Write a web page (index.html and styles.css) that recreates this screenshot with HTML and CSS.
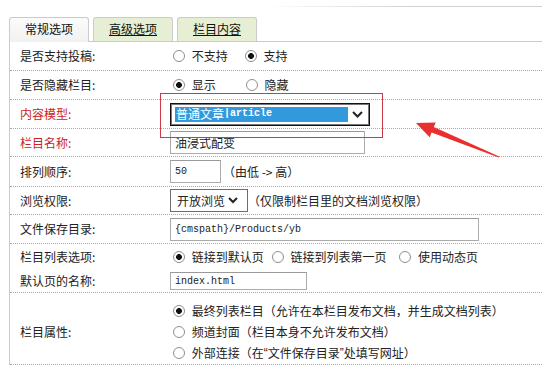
FILE: index.html
```html
<!DOCTYPE html>
<html lang="zh">
<head>
  <meta charset="UTF-8">
  <title>栏目设置</title>
  <link rel="stylesheet" href="styles.css">
</head>
<body>

<div class="page">
  <div class="topline"></div>

  <ul class="tabs">
    <li class="tab active">常规选项</li>
    <li class="tab"><a href="#">高级选项</a></li>
    <li class="tab"><a href="#">栏目内容</a></li>
  </ul>

  <div class="form">
    <div class="row">
      <div class="label">是否支持投稿:</div>
      <div class="field">
        <label class="opt"><input type="radio" class="radio" name="ispost"> 不支持</label>
        <label class="opt opt-a"><input type="radio" class="radio" name="ispost" checked> 支持</label>
      </div>
    </div>

    <div class="row">
      <div class="label">是否隐藏栏目:</div>
      <div class="field">
        <label class="opt"><input type="radio" class="radio" name="ishidden" checked> 显示</label>
        <label class="opt opt-b"><input type="radio" class="radio" name="ishidden"> 隐藏</label>
      </div>
    </div>

    <div class="row">
      <div class="label red">内容模型:</div>
      <div class="field">
        <div class="select select-model">
          <span class="picked"><span>普通文章</span><span class="mono">|article</span></span>
          <svg class="chev" width="11" height="7" viewBox="0 0 11 7"><path d="M1 1 L5.5 5.5 L10 1"/></svg>
        </div>
      </div>
    </div>

    <div class="row tight">
      <div class="label red">栏目名称:</div>
      <div class="field">
        <input type="text" class="text text-name" value="油浸式配变">
      </div>
    </div>

    <div class="row tall">
      <div class="label">排列顺序:</div>
      <div class="field">
        <input type="text" class="text mono text-order" value="50">
        <span class="note">（由低 -&gt; 高）</span>
      </div>
    </div>

    <div class="row tight">
      <div class="label">浏览权限:</div>
      <div class="field">
        <div class="select select-rank">
          <span>开放浏览</span>
          <svg class="chev" width="10" height="7" viewBox="0 0 10 7"><path d="M1 1 L5 5 L9 1"/></svg>
        </div>
        <span>（仅限制栏目里的文档浏览权限）</span>
      </div>
    </div>

    <div class="row">
      <div class="label">文件保存目录:</div>
      <div class="field">
        <input type="text" class="text mono text-path" value="{cmspath}/Products/yb">
      </div>
    </div>

    <div class="row open">
      <div class="label">栏目列表选项:</div>
      <div class="field">
        <label class="opt"><input type="radio" class="radio" name="isdefault" checked> 链接到默认页</label>
        <label class="opt opt-c"><input type="radio" class="radio" name="isdefault"> 链接到列表第一页</label>
        <label class="opt opt-d"><input type="radio" class="radio" name="isdefault"> 使用动态页</label>
      </div>
    </div>

    <div class="row small">
      <div class="label">默认页的名称:</div>
      <div class="field">
        <input type="text" class="text mono text-index" value="index.html">
      </div>
    </div>

    <div class="row multi">
      <div class="label">栏目属性:</div>
      <div class="field lines">
        <label class="opt line"><input type="radio" class="radio" name="ispart" checked> 最终列表栏目（允许在本栏目发布文档，并生成文档列表）</label>
        <label class="opt line"><input type="radio" class="radio" name="ispart"> 频道封面（栏目本身不允许发布文档）</label>
        <label class="opt line"><input type="radio" class="radio" name="ispart"> 外部连接（在<span class="q">“</span>文件保存目录<span class="q">”</span>处填写网址）</label>
      </div>
    </div>
  </div>

  <div class="mark"></div>
  <svg class="arrow" width="95" height="52" viewBox="0 0 95 52">
    <polygon points="6,12 25.7,11.4 23.8,16 89.2,45.5 88.8,46.5 21.6,21.6 19.7,26.2"/>
  </svg>
</div>

</body>
</html>
```

FILE: styles.css
```css
body {
  margin: 0;
  font-family: "Noto Sans CJK SC", sans-serif;
  font-size: 12px;
  line-height: 16px;
  color: #222;
  background: #ffffff;
}
.page {
  position: relative;
  padding-left: 9px;
}
.topline {
  height: 1px;
  margin-top: 6px;
  background: linear-gradient(to right, rgba(210,210,210,0) 48%, #d2d2d2 75%);
}
.tabs {
  display: flex;
  align-items: flex-start;
  gap: 4px;
  height: 24px;
  margin: 10px 0 0;
  padding: 0;
  list-style: none;
  border-bottom: 1px solid #cbcbcb;
}
.tab {
  width: 80px;
  height: 24px;
  box-sizing: border-box;
  border: 1px solid #cbcbcb;
  border-bottom: none;
  border-radius: 3px 3px 0 0;
  background: #e6efd3;
  text-align: center;
  line-height: 22px;
}
.tab a {
  color: #111;
  text-decoration: underline;
}
.tab.active {
  height: 25px;
  background: linear-gradient(#fbfbfb, #f1f1f1);
  color: #111;
}
.form {
  border-left: 1px solid #cbcbcb;
}
.row {
  display: flex;
  align-items: center;
  height: 28px;
  border-bottom: 1px dotted #a8a8a8;
}
.row.tight {
  height: 27px;
}
.row.tall {
  height: 29px;
}
.row.open {
  height: 26px;
  border-bottom: none;
}
.row.small {
  height: 22px;
}
.row.multi {
  height: auto;
  padding: 7px 0 1px;
}
.label {
  flex: none;
  width: 160px;
  padding-left: 10px;
  box-sizing: border-box;
}
.label.red {
  color: #cc2222;
}
.field {
  display: flex;
  align-items: center;
}
.lines {
  flex-direction: column;
  align-items: flex-start;
}
.opt {
  display: inline-flex;
  align-items: center;
  white-space: pre;
}
.opt-a {
  margin-left: 14px;
}
.opt-b {
  margin-left: 27px;
}
.opt-c {
  margin-left: 5px;
}
.opt-d {
  margin-left: 10px;
}
.line {
  height: 21px;
}
.q {
  font-family: "Liberation Sans", sans-serif;
}
.radio {
  appearance: none;
  -webkit-appearance: none;
  width: 12px;
  height: 12px;
  margin: 0 4px 0 3px;
  box-sizing: border-box;
  border: 1px solid #8e8e8e;
  border-radius: 50%;
  background: #fff;
}
.radio:checked {
  background: radial-gradient(circle, #111 0, #111 2.6px, #fff 3.2px);
}
.text {
  height: 23px;
  box-sizing: border-box;
  margin: 0;
  padding: 0 4px;
  border: 1px solid #ababab;
  border-top-color: #9a9a9a;
  font-family: "Noto Sans CJK SC", sans-serif;
  font-size: 12px;
  color: #222;
  background: #fff;
}
.mono {
  font-family: "Liberation Mono", monospace;
  font-size: 10px;
}
.text-name {
  width: 195px;
}
.text-order {
  width: 51px;
}
.text-path {
  width: 309px;
}
.text-index {
  width: 137px;
  height: 18px;
}
.note {
  margin-left: 2px;
}
.select {
  display: flex;
  align-items: center;
  height: 23px;
  box-sizing: border-box;
  background: #fff;
}
.select-model {
  width: 200px;
  border: 1px solid #111;
  box-shadow: inset 0 0 0 1px #777;
}
.picked {
  display: flex;
  align-items: center;
  width: 173px;
  height: 15px;
  margin-left: 4px;
  padding-left: 1px;
  box-sizing: border-box;
  background: #3399dd;
  color: #fff;
}
.picked .mono {
  font-weight: bold;
}
.select-model .chev {
  margin-left: auto;
  margin-right: 6px;
}
.select-rank {
  width: 78px;
  padding-left: 6px;
  border: 1px solid #6d6d6d;
}
.select-rank .chev {
  margin-left: 3px;
}
.chev path {
  fill: none;
  stroke: #222;
  stroke-width: 2;
}
.mark {
  position: absolute;
  left: 160px;
  top: 87px;
  width: 223px;
  height: 45px;
  box-sizing: border-box;
  border: 1px solid #cf3a43;
}
.arrow {
  position: absolute;
  left: 410px;
  top: 105px;
}
.arrow polygon {
  fill: #ea2f2f;
}
```
